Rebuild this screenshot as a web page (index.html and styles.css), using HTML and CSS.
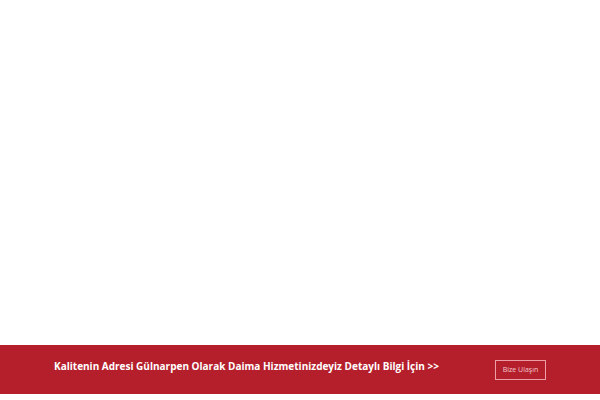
FILE: index.html
```html
<!DOCTYPE html>
<html lang="tr">
<head>
<meta charset="utf-8">
<link rel="stylesheet" href="styles.css">
</head>
<body>
<div class="page">
  <main class="content"></main>
  <section class="cta">
    <p class="cta-text">Kalitenin Adresi Gülnarpen Olarak Daima Hizmetinizdeyiz Detaylı Bilgi İçin &gt;&gt;</p>
    <a class="cta-btn" href="#">Bize Ulaşın</a>
  </section>
  <div class="foot"></div>
</div>
</body>
</html>
```
FILE: styles.css
```css
html, body { margin: 0; padding: 0; background: #ffffff; }
.page { width: 600px; height: 400px; display: flex; flex-direction: column; }
.content { flex: 1; }
.cta {
  height: 49px;
  background: #b51f2c;
  display: flex;
  align-items: center;
  padding: 0 54px 0 54px;
  box-sizing: border-box;
}
.cta-text {
  margin: 0 0 8px 0;
  flex: 1;
  color: #ffffff;
  font-family: "Open Sans", sans-serif;
  font-weight: 700;
  font-size: 10px;
  letter-spacing: 0;
}
.cta-btn {
  width: 51px;
  height: 20px;
  box-sizing: border-box;
  border: 1px solid rgba(255, 200, 205, 0.75);
  color: #f3c9cd;
  font-family: "Open Sans", sans-serif;
  font-size: 7px;
  display: flex;
  align-items: center;
  justify-content: center;
  text-decoration: none;
}
.foot { height: 6px; }
```
